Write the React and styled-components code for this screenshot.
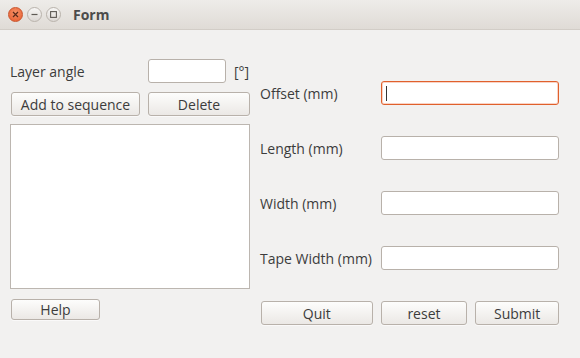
import React from 'react'
import styled, { createGlobalStyle } from 'styled-components'

const GlobalStyle = createGlobalStyle`
  html, body {
    margin: 0;
    padding: 0;
    background: #f2f1f0;
  }
  body {
    font-family: "Open Sans", "Noto Sans", sans-serif;
    font-size: 14px;
    color: #3c3c3c;
  }
`

const Window = styled.div`
  width: 580px;
  height: 358px;
  background: #f2f1f0;
  display: flex;
  flex-direction: column;
`

const TitleBar = styled.div`
  height: 30px;
  box-sizing: border-box;
  display: flex;
  align-items: center;
  padding-left: 8px;
  background: linear-gradient(#eeece9, #dfdbd6);
  border-bottom: 1px solid #d2cdc7;
`

const WinButton = styled.span`
  width: 15px;
  height: 15px;
  box-sizing: border-box;
  border-radius: 50%;
  margin-right: 4px;
  display: flex;
  align-items: center;
  justify-content: center;
  border: 1px solid ${p => (p.close ? '#c9542c' : '#b9b3ac')};
  background: ${p =>
    p.close
      ? 'radial-gradient(circle at 50% 35%, #f69167, #e75a2c)'
      : 'linear-gradient(#f7f6f5, #dcd8d4)'};
`

const Title = styled.span`
  margin-left: 8px;
  font-weight: 700;
  font-size: 14px;
  color: #4b4b4b;
`

const Body = styled.div`
  flex: 1;
  display: grid;
  grid-template-columns: 240px 299px;
  column-gap: 10px;
  padding-left: 10px;
`

const LeftColumn = styled.div`
  display: flex;
  flex-direction: column;
  padding-top: 29px;
`

const AngleRow = styled.div`
  display: flex;
  align-items: center;
  height: 24px;
`

const Label = styled.span`
  width: ${p => p.width}px;
  flex: none;
  white-space: nowrap;
`

const Unit = styled.span`
  margin-left: 8px;
  color: #3c3c3c;
`

const Input = styled.div`
  width: ${p => p.width}px;
  height: 24px;
  box-sizing: border-box;
  background: #fff;
  border: 1px solid ${p => (p.focused ? '#e0602c' : '#b8b1aa')};
  border-radius: 3px;
  box-shadow: ${p => (p.focused ? 'inset 0 0 0 1px rgba(240,130,90,0.35)' : 'none')};
  display: flex;
  align-items: center;
  padding-left: 4px;
`

const Caret = styled.span`
  width: 1px;
  height: 15px;
  background: #333;
`

const ButtonRow = styled.div`
  display: flex;
  gap: ${p => p.gap}px;
  margin-top: ${p => p.top}px;
  padding-left: ${p => p.indent || 0}px;
`

const Button = styled.button`
  width: ${p => p.width}px;
  height: ${p => p.height || 24}px;
  box-sizing: border-box;
  padding: 0;
  font-family: inherit;
  font-size: 14px;
  color: #3c3c3c;
  border: 1px solid #b8b1aa;
  border-radius: 3px;
  background: linear-gradient(#fdfdfc, #ebe8e5);
  box-shadow: 0 1px 0 rgba(255, 255, 255, 0.6);
`

const ListBox = styled.div`
  margin-top: 8px;
  width: 240px;
  height: 165px;
  box-sizing: border-box;
  background: #fff;
  border: 1px solid #bcb6b0;
`

const RightColumn = styled.div`
  display: flex;
  flex-direction: column;
  padding-top: 51px;
`

const FieldList = styled.div`
  display: flex;
  flex-direction: column;
  gap: 31px;
`

const Field = styled.div`
  display: flex;
  align-items: center;
  height: 24px;
`

const fields = ['Length (mm)', 'Width (mm)', 'Tape Width (mm)']

const App = () => (
  <Window>
    <GlobalStyle />
    <TitleBar>
      <WinButton close>
        <svg width="7" height="7" viewBox="0 0 7 7">
          <path d="M1 1L6 6M6 1L1 6" stroke="#5a2a1a" strokeWidth="1.2" />
        </svg>
      </WinButton>
      <WinButton>
        <svg width="7" height="7" viewBox="0 0 7 7">
          <path d="M0.5 3.5H6.5" stroke="#5e5a55" strokeWidth="1.2" />
        </svg>
      </WinButton>
      <WinButton>
        <svg width="7" height="7" viewBox="0 0 7 7">
          <rect x="0.6" y="0.6" width="5.8" height="5.8" fill="none" stroke="#5e5a55" strokeWidth="1.1" />
        </svg>
      </WinButton>
      <Title>Form</Title>
    </TitleBar>
    <Body>
      <LeftColumn>
        <AngleRow>
          <Label width={138}>Layer angle</Label>
          <Input width={78} />
          <Unit>[°]</Unit>
        </AngleRow>
        <ButtonRow gap={8} top={9} indent={1}>
          <Button width={129}>Add to sequence</Button>
          <Button width={102}>Delete</Button>
        </ButtonRow>
        <ListBox />
        <ButtonRow gap={0} top={10} indent={1}>
          <Button width={89} height={21}>Help</Button>
        </ButtonRow>
      </LeftColumn>
      <RightColumn>
        <FieldList>
          <Field>
            <Label width={121}>Offset (mm)</Label>
            <Input width={178} focused>
              <Caret />
            </Input>
          </Field>
          {fields.map(f => (
            <Field key={f}>
              <Label width={121}>{f}</Label>
              <Input width={178} />
            </Field>
          ))}
        </FieldList>
        <ButtonRow gap={8} top={31} indent={1}>
          <Button width={112}>Quit</Button>
          <Button width={87}>reset</Button>
          <Button width={84}>Submit</Button>
        </ButtonRow>
      </RightColumn>
    </Body>
  </Window>
)

export default App
